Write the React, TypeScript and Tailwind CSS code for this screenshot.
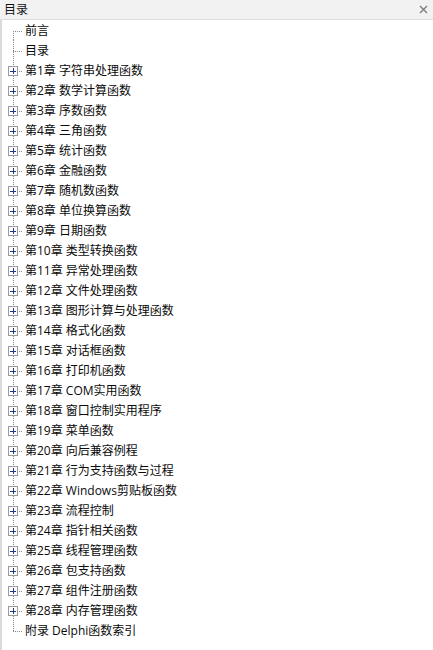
import React from "react";

const items: { label: string; expandable: boolean }[] = [
  { label: "前言", expandable: false },
  { label: "目录", expandable: false },
  { label: "第1章 字符串处理函数", expandable: true },
  { label: "第2章 数学计算函数", expandable: true },
  { label: "第3章 序数函数", expandable: true },
  { label: "第4章 三角函数", expandable: true },
  { label: "第5章 统计函数", expandable: true },
  { label: "第6章 金融函数", expandable: true },
  { label: "第7章 随机数函数", expandable: true },
  { label: "第8章 单位换算函数", expandable: true },
  { label: "第9章 日期函数", expandable: true },
  { label: "第10章 类型转换函数", expandable: true },
  { label: "第11章 异常处理函数", expandable: true },
  { label: "第12章 文件处理函数", expandable: true },
  { label: "第13章 图形计算与处理函数", expandable: true },
  { label: "第14章 格式化函数", expandable: true },
  { label: "第15章 对话框函数", expandable: true },
  { label: "第16章 打印机函数", expandable: true },
  { label: "第17章 COM实用函数", expandable: true },
  { label: "第18章 窗口控制实用程序", expandable: true },
  { label: "第19章 菜单函数", expandable: true },
  { label: "第20章 向后兼容例程", expandable: true },
  { label: "第21章 行为支持函数与过程", expandable: true },
  { label: "第22章 Windows剪贴板函数", expandable: true },
  { label: "第23章 流程控制", expandable: true },
  { label: "第24章 指针相关函数", expandable: true },
  { label: "第25章 线程管理函数", expandable: true },
  { label: "第26章 包支持函数", expandable: true },
  { label: "第27章 组件注册函数", expandable: true },
  { label: "第28章 内存管理函数", expandable: true },
  { label: "附录 Delphi函数索引", expandable: false },
];

function Connector({ first, last, expandable }: { first: boolean; last: boolean; expandable: boolean }) {
  const dot = "#8a8a8a";
  const y1 = first ? 11 : 0;
  const y2 = last ? 11 : 20;
  return (
    <svg width="22" height="20" viewBox="0 0 22 20" shapeRendering="crispEdges" className="shrink-0">
      <line x1="11.5" y1={y1} x2="11.5" y2={y2} stroke={dot} strokeWidth="1" strokeDasharray="1 1" />
      <line x1="11" y1="11.5" x2="21" y2="11.5" stroke={dot} strokeWidth="1" strokeDasharray="1 1" />
      {expandable && (
        <g>
          <rect x="6.5" y="6.5" width="9" height="9" fill="#ffffff" stroke="#9a9a9a" strokeWidth="1" />
          <line x1="8" y1="11" x2="14" y2="11" stroke="#1f3a8a" strokeWidth="1" />
          <line x1="11" y1="8" x2="11" y2="14" stroke="#1f3a8a" strokeWidth="1" />
        </g>
      )}
    </svg>
  );
}

export default function App() {
  return (
    <div
      className="w-[433px] h-[650px] bg-white flex flex-col overflow-hidden"
      style={{ fontFamily: '"Open Sans", "Noto Sans CJK SC", sans-serif' }}
    >
      <div className="h-5 shrink-0 flex items-center justify-between bg-[#f2f2f2] border-b border-[#dedede] pl-[4px] pr-[5px]">
        <span className="text-[12px] leading-none text-[#111]">目录</span>
        <svg width="9" height="9" viewBox="0 0 9 9">
          <path d="M1 1 L8 8 M8 1 L1 8" stroke="#7a7a7a" strokeWidth="1.3" />
        </svg>
      </div>
      <div className="flex-1 border-l-2 border-[#dadada]">
        {items.map((it, i) => (
          <div key={i} className="h-5 flex items-center">
            <Connector first={i === 0} last={i === items.length - 1} expandable={it.expandable} />
            <span className="ml-[1px] mt-[2px] text-[12px] leading-none text-[#0a0a0a] whitespace-nowrap">{it.label}</span>
          </div>
        ))}
      </div>
    </div>
  );
}
